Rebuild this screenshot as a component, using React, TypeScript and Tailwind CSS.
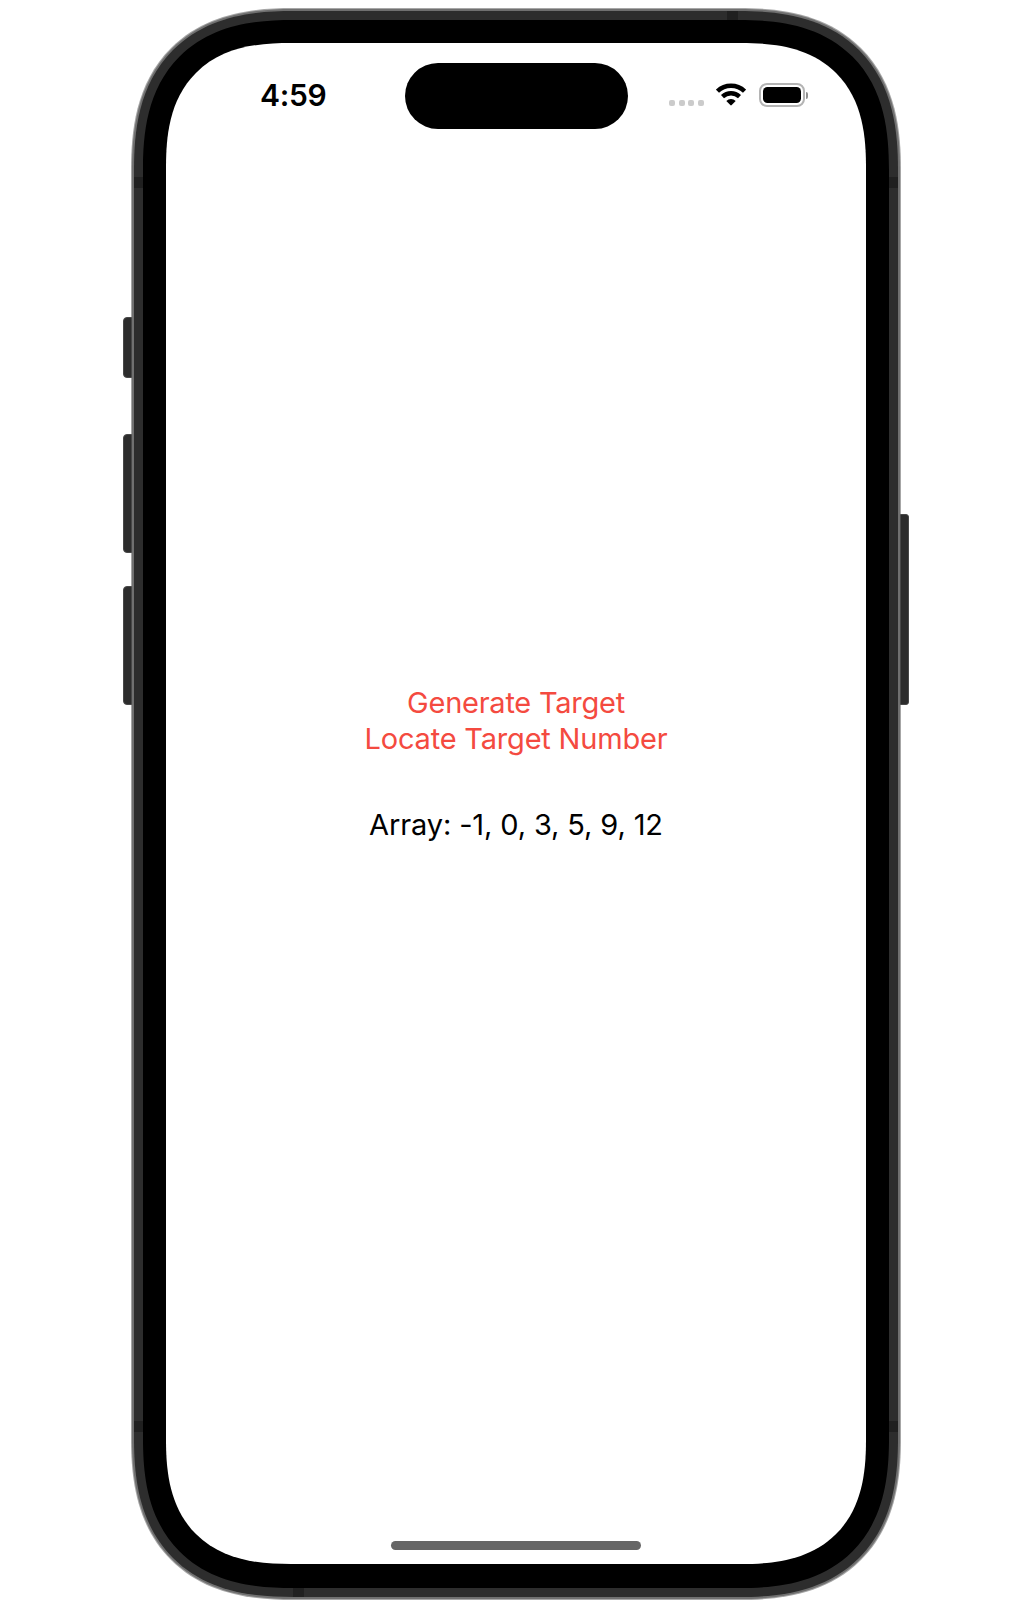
const sideButtons = [
  'left-[-8px] top-[309px] h-[61px] w-[9px] rounded-l-[4px]',
  'left-[-8px] top-[426px] h-[119px] w-[9px] rounded-l-[4px]',
  'left-[-8px] top-[578px] h-[119px] w-[9px] rounded-l-[4px]',
  'right-[-8px] top-[506px] h-[191px] w-[9px] rounded-r-[3px]',
];

const antennaBands = [
  'left-[3px] top-[169px] h-[11px] w-[9px]',
  'right-[3px] top-[169px] h-[11px] w-[9px]',
  'left-[3px] top-[1413px] h-[11px] w-[9px]',
  'right-[3px] top-[1413px] h-[11px] w-[9px]',
  'left-[596px] top-[3px] h-[9px] w-[11px]',
  'left-[162px] bottom-[3px] h-[9px] w-[11px]',
];

function CellularDots() {
  return (
    <div className="mt-[16.5px] flex gap-[3.4px]">
      {[0, 1, 2, 3].map((i) => (
        <span key={i} className="h-[6.2px] w-[6.2px] rounded-[2px] bg-[#cbcbcb]" />
      ))}
    </div>
  );
}

function WifiIcon() {
  return (
    <svg width="30" height="23" viewBox="0 0 30 23" fill="none" stroke="#000" strokeWidth="4.4">
      <path d="M1.5 8.2C9 1 21 1 28.5 8.2" />
      <path d="M6.5 13.6C11.3 9.1 18.7 9.1 23.5 13.6" />
      <path d="M10.3 18C13 15.3 17 15.3 19.7 18L15.7 22.1Q15 22.7 14.3 22.1Z" fill="#000" stroke="none" />
    </svg>
  );
}

function Battery() {
  return (
    <div className="flex items-center">
      <div className="h-[24px] w-[46px] rounded-[8px] border-2 border-[#b4b4b4] p-[1.75px]">
        <div className="h-full w-full rounded-[4.5px] bg-black" />
      </div>
      <div className="ml-[1.5px] h-[7px] w-[2px] rounded-r-full bg-[#909090]" />
    </div>
  );
}

function StatusBar() {
  return (
    <div className="flex h-[106px] items-start">
      <div className="ml-[94px] mt-[34px] h-[36px] w-[145px] text-[30px] leading-[36px] font-semibold tracking-[-0.3px]">
        4:59
      </div>
      <div className="mt-[20px] h-[66px] w-[223px] rounded-full bg-black" />
      <div className="ml-[41px] mt-[40px] flex h-[24px] items-start">
        <CellularDots />
        <div className="ml-[12px]"><WifiIcon /></div>
        <div className="ml-[13px]"><Battery /></div>
      </div>
    </div>
  );
}

export default function App() {
  return (
    <div className="flex h-[1619px] w-[1032px] bg-white pt-[8px] pl-[131px] font-['Inter','Liberation_Sans',sans-serif] text-black">
      <div className="relative h-[1592px] w-[770px] rounded-[162px] bg-[#a6a6a6] p-px [corner-shape:superellipse(1.29)]">
        {sideButtons.map((c) => (
          <div key={c} className={`absolute border border-[#484848] bg-[#2c2c2c] ${c}`} />
        ))}
        <div className="h-full w-full rounded-[161px] bg-[#707070] p-[2px] [corner-shape:superellipse(1.29)]">
          <div className="h-full w-full rounded-[159px] bg-[#2d2d2d] p-[9px] [corner-shape:superellipse(1.3)]">
            <div className="h-full w-full rounded-[150px] bg-black px-[23px] pt-[23px] pb-[24px] [corner-shape:superellipse(1.31)]">
              <div className="flex h-full w-full flex-col rounded-[125px] bg-white [corner-shape:superellipse(1.34)]">
                <StatusBar />
                <main className="flex flex-1 flex-col items-center pt-[535px] text-[29px] leading-[36px]">
                  <button className="h-[37px] tracking-[-0.25px] text-[#f44a40]">Generate Target</button>
                  <button className="h-[36px] tracking-[-0.2px] text-[#f44a40]">Locate Target Number</button>
                  <p className="mt-[50px] whitespace-nowrap tracking-[-0.13px]">Array: -1, 0, 3, 5, 9, 12</p>
                </main>
                <div className="mb-[14px] h-[9px] w-[250px] self-center rounded-full bg-[#666666]" />
              </div>
            </div>
          </div>
        </div>
        {antennaBands.map((c) => (
          <div key={c} className={`absolute bg-[#202020] ${c}`} />
        ))}
      </div>
    </div>
  );
}
